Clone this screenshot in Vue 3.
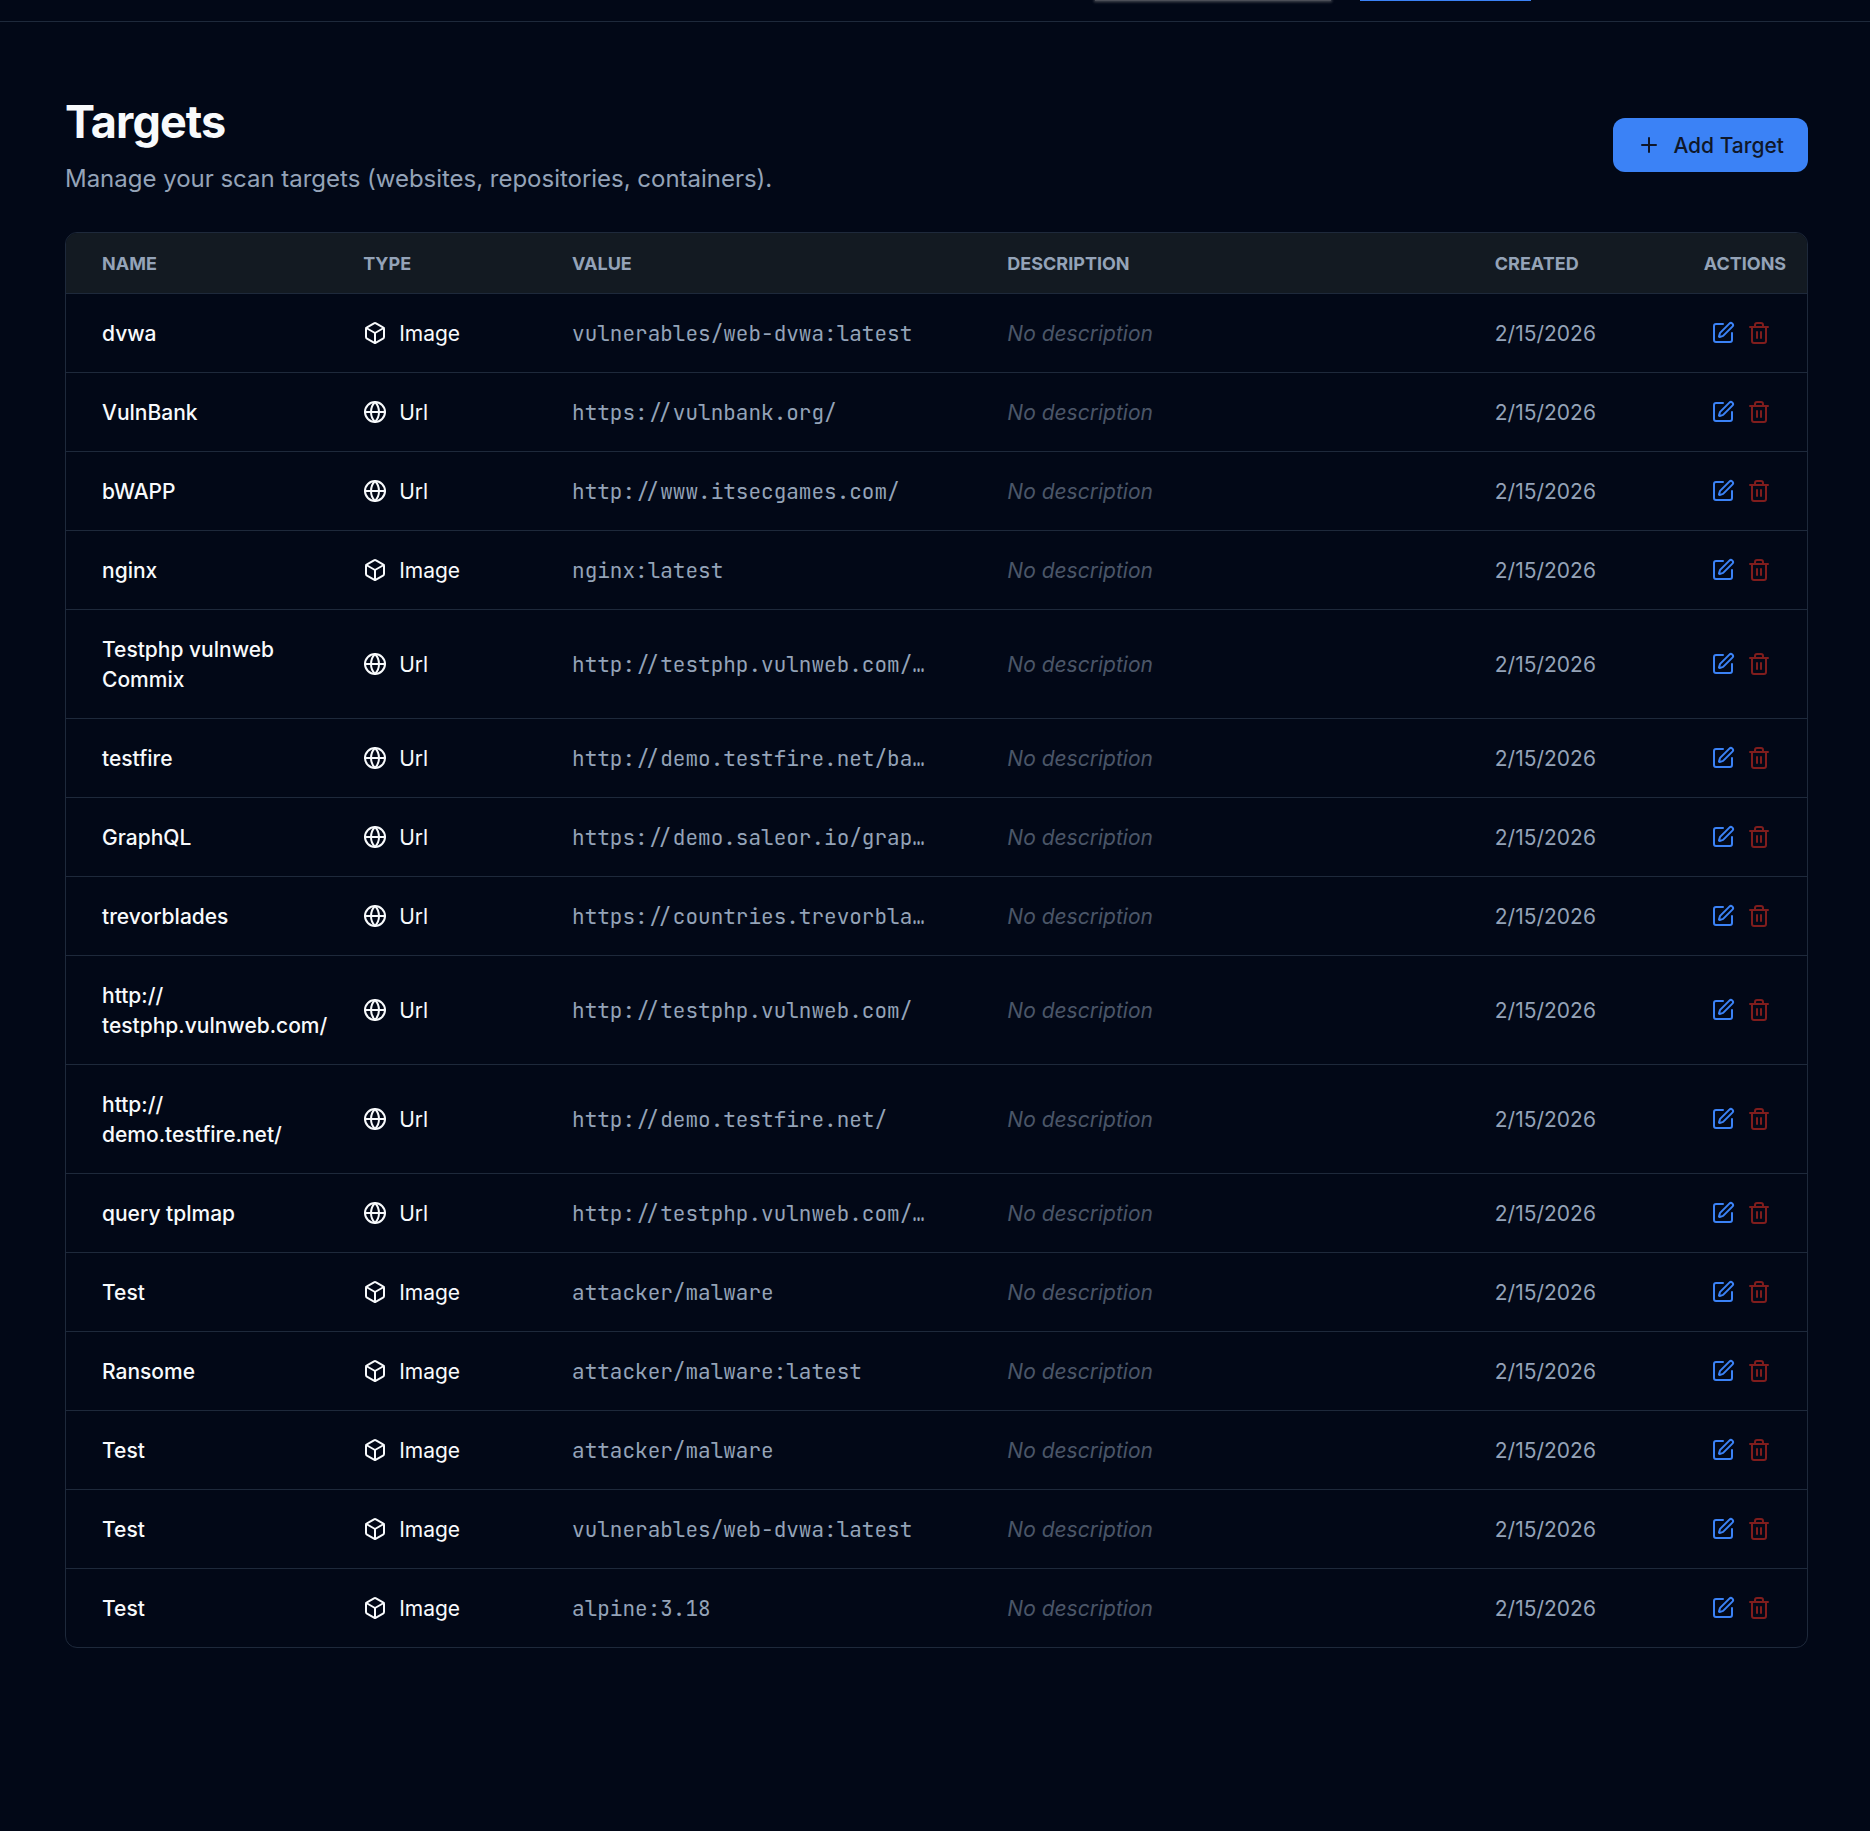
<script setup>
import { ref } from "vue";

const columns = ["Name", "Type", "Value", "Description", "Created", "Actions"];

const targets = ref([
  { name: "dvwa", type: "Image", value: "vulnerables/web-dvwa:latest" },
  { name: "VulnBank", type: "Url", value: "https://vulnbank.org/" },
  { name: "bWAPP", type: "Url", value: "http://www.itsecgames.com/" },
  { name: "nginx", type: "Image", value: "nginx:latest" },
  { name: "Testphp vulnweb Commix", type: "Url", value: "http://testphp.vulnweb.com/…" },
  { name: "testfire", type: "Url", value: "http://demo.testfire.net/ba…" },
  { name: "GraphQL", type: "Url", value: "https://demo.saleor.io/grap…" },
  { name: "trevorblades", type: "Url", value: "https://countries.trevorbla…" },
  { name: "http://testphp.vulnweb.com/", type: "Url", value: "http://testphp.vulnweb.com/" },
  { name: "http://demo.testfire.net/", type: "Url", value: "http://demo.testfire.net/" },
  { name: "query tplmap", type: "Url", value: "http://testphp.vulnweb.com/…" },
  { name: "Test", type: "Image", value: "attacker/malware" },
  { name: "Ransome", type: "Image", value: "attacker/malware:latest" },
  { name: "Test", type: "Image", value: "attacker/malware" },
  { name: "Test", type: "Image", value: "vulnerables/web-dvwa:latest" },
  { name: "Test", type: "Image", value: "alpine:3.18" },
]);

const created = "2/15/2026";

// long urls may only wrap after the protocol
const parts = (name) => name.split(/(?<=:\/\/)/);
</script>

<template>
  <div class="page">
    <nav class="topbar">
      <div class="search"></div>
      <div class="tab"></div>
    </nav>
    <main>
      <header class="heading">
        <div>
          <h1>Targets</h1>
          <p>Manage your scan targets (websites, repositories, containers).</p>
        </div>
        <button class="add">
          <svg class="icon" viewBox="0 0 24 24">
            <path d="M5 12h14" />
            <path d="M12 5v14" />
          </svg>
          <span>Add Target</span>
        </button>
      </header>

      <table>
        <thead>
          <tr>
            <th v-for="column in columns" :key="column">{{ column }}</th>
          </tr>
        </thead>
        <tbody>
          <tr v-for="(target, index) in targets" :key="index">
            <td class="name">
              <template v-for="(part, i) in parts(target.name)" :key="i"
                ><wbr v-if="i > 0" />{{ part }}</template
              >
            </td>
            <td class="icons">
              <div class="type">
                <svg v-if="target.type === 'Image'" class="icon" viewBox="0 0 24 24">
                  <path
                    d="M21 8a2 2 0 0 0-1-1.73l-7-4a2 2 0 0 0-2 0l-7 4A2 2 0 0 0 3 8v8a2 2 0 0 0 1 1.73l7 4a2 2 0 0 0 2 0l7-4A2 2 0 0 0 21 16Z"
                  />
                  <path d="m3.3 7 8.7 5 8.7-5" />
                  <path d="M12 22V12" />
                </svg>
                <svg v-else class="icon" viewBox="0 0 24 24">
                  <circle cx="12" cy="12" r="10" />
                  <path d="M12 2a14.5 14.5 0 0 0 0 20 14.5 14.5 0 0 0 0-20" />
                  <path d="M2 12h20" />
                </svg>
                <span>{{ target.type }}</span>
              </div>
            </td>
            <td class="value">{{ target.value }}</td>
            <td class="description">No description</td>
            <td class="created">{{ created }}</td>
            <td class="icons">
              <div class="actions">
                <svg class="icon edit" viewBox="0 0 24 24">
                  <path d="M12 3H5a2 2 0 0 0-2 2v14a2 2 0 0 0 2 2h14a2 2 0 0 0 2-2v-7" />
                  <path
                    d="M18.375 2.625a1 1 0 0 1 3 3l-9.013 9.014a2 2 0 0 1-.853.505l-2.873.84a.5.5 0 0 1-.62-.62l.84-2.873a2 2 0 0 1 .506-.852z"
                  />
                </svg>
                <svg class="icon trash" viewBox="0 0 24 24">
                  <path d="M3 6h18" />
                  <path d="M19 6v14c0 1-1 2-2 2H7c-1 0-2-1-2-2V6" />
                  <path d="M8 6V4c0-1 1-2 2-2h4c1 0 2 1 2 2v2" />
                  <path d="M10 11v6" />
                  <path d="M14 11v6" />
                </svg>
              </div>
            </td>
          </tr>
        </tbody>
      </table>
    </main>
  </div>
</template>

<style>
body {
  margin: 0;
  background-color: #020817;
}
</style>

<style scoped>
.page {
  min-height: 1831px;
  box-sizing: border-box;
  color: #f8fafc;
  font-family: Inter, "Liberation Sans", sans-serif;
  font-size: 21px;
  line-height: 30px;
}

.topbar {
  display: flex;
  gap: 29px;
  height: 21px;
  padding-left: 1095px;
  border-bottom: 1px solid #1e293b;
}

.search {
  width: 236px;
  height: 1px;
  background-color: #4b4e57;
  box-shadow: 0 0 3px 1px #4b4e57;
}

.tab {
  width: 171px;
  height: 1px;
  background-color: #3b82f6;
}

main {
  padding: 72px 62px 0 65px;
}

.heading {
  display: flex;
  align-items: center;
  justify-content: space-between;
  height: 102px;
  margin-bottom: 36px;
}

h1 {
  margin: 2px 0 12px;
  font-size: 45px;
  font-weight: 700;
  line-height: 54px;
  letter-spacing: -0.9px;
}

.heading p {
  margin: 0;
  font-size: 24px;
  line-height: 36px;
  letter-spacing: -0.02px;
  color: #94a3b8;
}

.icon {
  flex: none;
  width: 24px;
  height: 24px;
  fill: none;
  stroke: currentColor;
  stroke-width: 2;
  stroke-linecap: round;
  stroke-linejoin: round;
}

.add {
  display: flex;
  align-items: center;
  gap: 12px;
  height: 54px;
  padding: 0 24px;
  border: none;
  border-radius: 12px;
  background-color: #3b82f6;
  color: #0f172a;
  font: inherit;
  font-weight: 500;
}

.add span,
.type span {
  padding-top: 1px;
  margin-bottom: -1px;
}

table {
  width: 100%;
  table-layout: fixed;
  border: 1px solid #1e293b;
  border-radius: 12px;
  border-collapse: separate;
  border-spacing: 0;
  overflow: hidden;
}

th,
td {
  box-sizing: border-box;
}

th {
  height: 61px;
  padding: 2px 0 0 36px;
  border-bottom: 1px solid #1e293b;
  background-color: #131a22;
  color: #94a3b8;
  font-size: 18px;
  font-weight: 650;
  text-align: left;
  text-transform: uppercase;
}

th:nth-child(1) {
  width: 15%;
}

th:nth-child(2),
th:nth-child(5) {
  width: 12%;
}

th:nth-child(3) {
  width: 25%;
}

th:nth-child(4) {
  width: 28%;
}

th:nth-child(6) {
  width: 8%;
}

td {
  padding: 25px 0 23px 36px;
  border-bottom: 1px solid #1e293b;
}

td.icons {
  padding: 24px 0 24px 36px;
}

tr:last-child td {
  border-bottom: none;
}

.name {
  font-weight: 500;
}

.type {
  display: flex;
  align-items: center;
  gap: 12px;
  height: 30px;
}

.value {
  color: #94a3b8;
  font-family: "JetBrains Mono", "DejaVu Sans Mono", monospace;
  white-space: nowrap;
}

.description {
  color: #4b5668;
  font-style: italic;
}

.created {
  color: #94a3b8;
}

.actions {
  display: flex;
  justify-content: flex-end;
  gap: 12px;
  padding-right: 36px;
}

.edit {
  color: #3b82f6;
}

.trash {
  color: #7f1d1d;
}
</style>
